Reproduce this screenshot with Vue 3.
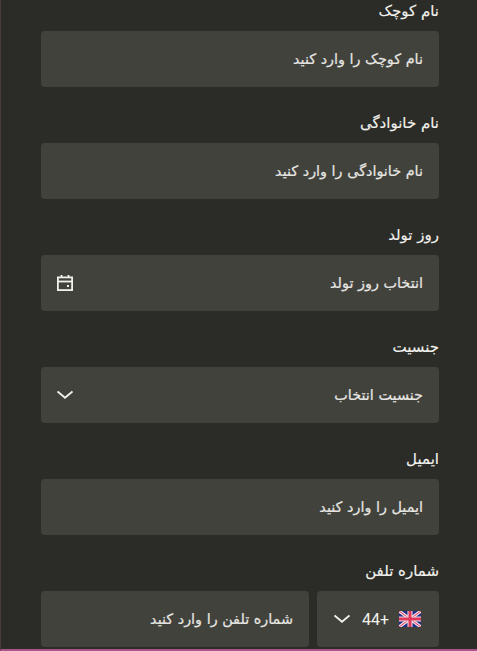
<template>
  <div class="page" dir="rtl">
    <form class="profile-form" @submit.prevent>
      <div v-for="field in fields" :key="field.label" class="field">
        <label class="field-label">{{ field.label }}</label>
        <div class="box">
          <span class="box-text">{{ field.hint }}</span>
          <svg v-if="field.icon === 'calendar'" class="icon" viewBox="0 0 16 16" fill="none" stroke="currentColor" stroke-width="1.8">
            <rect x="0.9" y="2.4" width="14.2" height="12.7" />
            <path d="M1 6.5h14" />
            <path d="M4.5 0v2M11.5 0v2" />
            <rect x="10" y="10" width="2" height="2" fill="currentColor" stroke="none" />
          </svg>
          <svg v-if="field.icon === 'chevron'" class="icon" viewBox="0 0 16 16" fill="none" stroke="currentColor" stroke-width="1.9">
            <path d="M0.5 4.5L8 10.8L15.5 4.5" />
          </svg>
        </div>
      </div>

      <div class="field">
        <label class="field-label">شماره تلفن</label>
        <div class="phone-row">
          <div class="country box">
            <svg class="flag" viewBox="0 0 22 16">
              <rect width="22" height="16" fill="#1f2f86" />
              <path d="M0 0L22 16M22 0L0 16" stroke="#f3dfe6" stroke-width="3.2" />
              <path d="M0 0L22 16M22 0L0 16" stroke="#e0385a" stroke-width="1" />
              <path d="M11 0v16M0 8h22" stroke="#f3dfe6" stroke-width="5" />
              <path d="M11 0v16M0 8h22" stroke="#e0385a" stroke-width="3" />
            </svg>
            <span class="code">+44</span>
            <svg class="icon code-chevron" viewBox="0 0 16 16" fill="none" stroke="currentColor" stroke-width="1.9">
              <path d="M0.5 4.5L8 10.8L15.5 4.5" />
            </svg>
          </div>
          <div class="box phone">
            <span class="box-text">شماره تلفن را وارد کنید</span>
          </div>
        </div>
      </div>
    </form>
  </div>
</template>

<script setup>
const fields = [
  { label: 'نام کوچک', hint: 'نام کوچک را وارد کنید' },
  { label: 'نام خانوادگی', hint: 'نام خانوادگی را وارد کنید' },
  { label: 'روز تولد', hint: 'انتخاب روز تولد', icon: 'calendar' },
  { label: 'جنسیت', hint: 'جنسیت انتخاب', icon: 'chevron' },
  { label: 'ایمیل', hint: 'ایمیل را وارد کنید' },
]
</script>

<style scoped>
.page {
  box-sizing: border-box;
  width: 477px;
  height: 651px;
  overflow: hidden;
  background: #2b2b27;
  border-left: 1px solid #4a3a3a;
  border-bottom: 2px solid #a8558a;
  color: #f2f2ee;
  font-family: "DejaVu Sans", "Noto Sans", sans-serif;
}

.profile-form {
  display: flex;
  flex-direction: column;
  gap: 25px;
  padding: 0 38px 0 40px;
}

.field-label {
  display: block;
  height: 31px;
  line-height: 23px;
  font-size: 15px;
  color: #f2f2ee;
  -webkit-text-stroke: 0.15px currentColor;
}

.box {
  display: flex;
  align-items: center;
  justify-content: space-between;
  height: 56px;
  padding: 0 16px;
  box-sizing: border-box;
  background: #42423d;
  border-radius: 4px;
  font-size: 14.4px;
  color: #e6e6e2;
}

.box-text {
  -webkit-text-stroke: 0.2px currentColor;
}

.icon {
  width: 16px;
  height: 16px;
  flex: none;
  color: #f0f0ec;
}

.phone-row {
  display: flex;
  gap: 8px;
}

.country {
  flex: 0 0 122px;
  justify-content: flex-start;
  gap: 10px;
  padding: 0 18px 0 0;
}

.code-chevron {
  margin-right: 2px;
}

.flag {
  width: 22px;
  height: 16px;
  flex: none;
}

.code {
  font-family: Roboto, "Liberation Sans", sans-serif;
  font-size: 16px;
  color: #f2f2ee;
}

.phone {
  flex: 1;
}
</style>

<style>
html, body {
  background: #2b2b27;
}
</style>
